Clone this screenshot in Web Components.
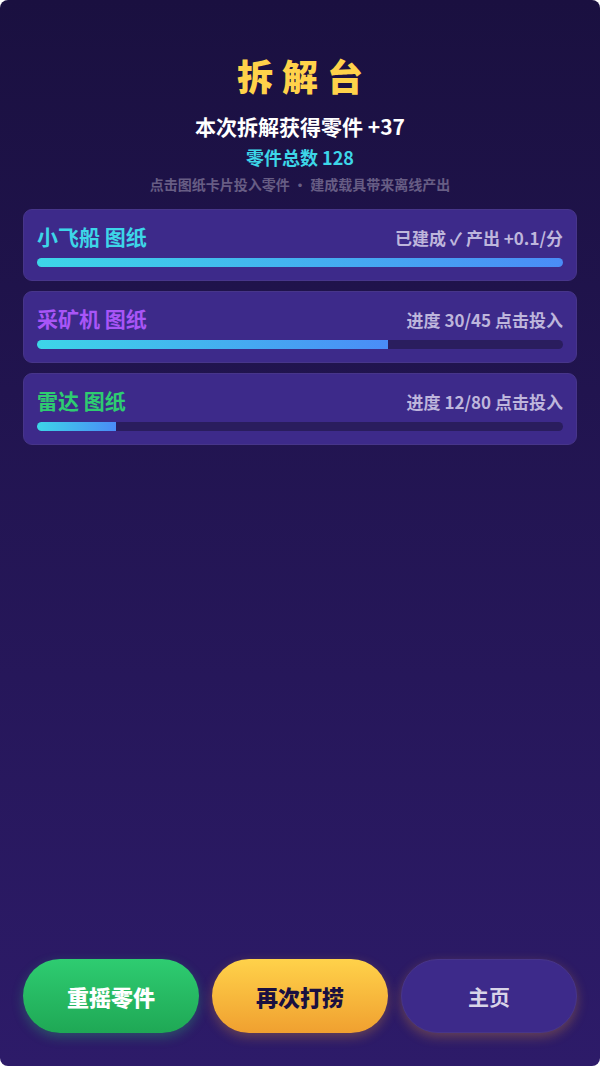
<!DOCTYPE html>
<html lang="zh-CN">
<head>
  <meta charset="UTF-8">
  <meta name="viewport" content="width=device-width, initial-scale=1.0">
  <title>拆解台</title>
  <style>
    body {
      margin: 0;
      background: #fff;
      font-family: "Noto Sans CJK SC", sans-serif;
      font-weight: 700;
    }
  </style>
</head>
<body>
  <salvage-screen>
    <salvage-header slot="header" gained="37" total="128"></salvage-header>
    <blueprint-card name="小飞船 图纸" status="已建成 ✓ 产出 +0.1/分" value="1" max="1" style="--accent: #3dd6e8"></blueprint-card>
    <blueprint-card name="采矿机 图纸" status="进度 30/45 点击投入" value="30" max="45" style="--accent: #a855f7"></blueprint-card>
    <blueprint-card name="雷达 图纸" status="进度 12/80 点击投入" value="12" max="80" style="--accent: #2ecc71"></blueprint-card>
    <pill-button slot="actions" type="success">重摇零件</pill-button>
    <pill-button slot="actions" type="primary">再次打捞</pill-button>
    <pill-button slot="actions" type="ghost">主页</pill-button>
  </salvage-screen>

  <script>
    class SalvageScreen extends HTMLElement {
      constructor() {
        super();

        this.attachShadow({ mode: 'open' });

        this.shadowRoot.innerHTML = `
          <style>
            :host {
              display: flex;
              flex-direction: column;
              box-sizing: border-box;
              min-height: 100vh;
              padding: 50px 23px 33px;
              border-radius: 8px;
              background: linear-gradient(180deg, #1a1040, #2d1b69);
            }

            main {
              display: flex;
              flex: 1;
              flex-direction: column;
              gap: 10px;
              margin-top: 14px;
            }

            footer {
              display: flex;
              gap: 13px;
              margin-top: 24px;
            }
          </style>
          <slot name="header"></slot>
          <main><slot></slot></main>
          <footer><slot name="actions"></slot></footer>
        `;
      }
    }

    class SalvageHeader extends HTMLElement {
      static observedAttributes = ['gained', 'total'];

      constructor() {
        super();

        this.attachShadow({ mode: 'open' });

        this.shadowRoot.innerHTML = `
          <style>
            :host {
              display: block;
              text-align: center;
            }

            h1, p {
              margin: 0;
            }

            h1 {
              padding-left: 9px;
              color: #ffd24a;
              font-size: 36px;
              font-weight: 900;
              line-height: 50px;
              letter-spacing: 9px;
            }

            .gained {
              margin-top: 11px;
              color: #fff;
              font-size: 21px;
              line-height: 30px;
            }

            .total {
              margin-top: 4px;
              color: #3dd6e8;
              font-size: 18px;
              line-height: 24px;
            }

            .hint {
              margin-top: 4px;
              color: #675d84;
              font-size: 14px;
              line-height: 22px;
            }
          </style>
          <h1>拆解台</h1>
          <p class="gained">本次拆解获得零件 +<span id="gained"></span></p>
          <p class="total">零件总数 <span id="total"></span></p>
          <p class="hint">点击图纸卡片投入零件 · 建成载具带来离线产出</p>
        `;
      }

      attributeChangedCallback(name, oldValue, newValue) {
        this.shadowRoot.getElementById(name).textContent = newValue;
      }
    }

    class BlueprintCard extends HTMLElement {
      static observedAttributes = ['name', 'status', 'value', 'max'];

      constructor() {
        super();

        this.attachShadow({ mode: 'open' });

        this.shadowRoot.innerHTML = `
          <style>
            :host {
              display: block;
            }

            button {
              display: block;
              box-sizing: border-box;
              width: 100%;
              padding: 12px 13px 13px;
              border: 1px solid #47358a;
              border-radius: 9px;
              background: #3d2a8a;
              font: inherit;
              text-align: left;
              cursor: pointer;
            }

            .row {
              display: flex;
              align-items: baseline;
              justify-content: space-between;
              line-height: 28px;
            }

            .name {
              color: var(--accent);
              font-size: 21px;
            }

            .status {
              color: #beb6dc;
              font-size: 17px;
            }

            .track {
              display: block;
              height: 9px;
              margin-top: 6px;
              overflow: hidden;
              border-radius: 5px;
              background: #2a1d5e;
            }

            .fill {
              display: block;
              height: 100%;
              background: linear-gradient(90deg, #3dd6e8, #4a8cf7);
            }
          </style>
          <button type="button">
            <span class="row">
              <span class="name"></span>
              <span class="status"></span>
            </span>
            <span class="track"><span class="fill"></span></span>
          </button>
        `;

        this.shadowRoot.querySelector('button').addEventListener('click', () => {
          this.dispatchEvent(new CustomEvent('blueprint-click', {
            bubbles: true,
            composed: true
          }));
        });
      }

      attributeChangedCallback(name, oldValue, newValue) {
        if (name === 'name' || name === 'status') {
          this.shadowRoot.querySelector('.' + name).textContent = newValue;
        } else {
          const ratio = this.getAttribute('value') / (this.getAttribute('max') || 1);
          this.shadowRoot.querySelector('.fill').style.width = Math.min(ratio, 1) * 100 + '%';
        }
      }
    }

    class PillButton extends HTMLElement {
      static observedAttributes = ['type'];

      constructor() {
        super();

        this.attachShadow({ mode: 'open' });

        this.shadowRoot.innerHTML = `
          <style>
            :host {
              display: block;
              flex: 1;
            }

            button {
              box-sizing: border-box;
              width: 100%;
              height: 74px;
              padding: 0;
              border: none;
              border-radius: 37px;
              font: inherit;
              font-size: 22px;
              font-weight: 900;
              cursor: pointer;
            }

            .success {
              background: linear-gradient(180deg, #2ecc71, #1fa855);
              box-shadow: 0 4px 12px rgba(46, 204, 113, 0.3);
              color: #fff;
            }

            .primary {
              background: linear-gradient(180deg, #ffd24a, #f0a030);
              box-shadow: 0 4px 12px rgba(240, 160, 48, 0.3);
              color: #1a1040;
            }

            .ghost {
              border: 1px solid #47358a;
              background: #3d2a8a;
              box-shadow: 0 4px 12px rgba(240, 160, 48, 0.3);
              color: #d8d4e8;
              font-size: 21px;
              font-weight: 700;
            }
          </style>
          <button type="button"><slot></slot></button>
        `;
      }

      attributeChangedCallback(name, oldValue, newValue) {
        this.shadowRoot.querySelector('button').className = newValue;
      }
    }

    customElements.define('salvage-screen', SalvageScreen);
    customElements.define('salvage-header', SalvageHeader);
    customElements.define('blueprint-card', BlueprintCard);
    customElements.define('pill-button', PillButton);
  </script>
</body>
</html>
